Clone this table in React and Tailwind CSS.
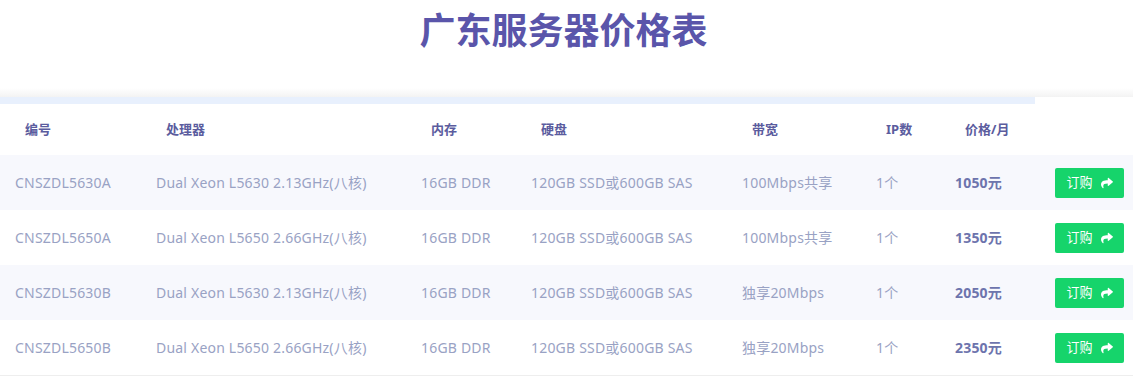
import React from "react";
import { FaShare } from "react-icons/fa";

const servers = [
  { id: "CNSZDL5630A", cpu: "Dual Xeon L5630 2.13GHz(八核)", ram: "16GB DDR", disk: "120GB SSD或600GB SAS", bw: "100Mbps共享", ip: "1个", price: "1050元" },
  { id: "CNSZDL5650A", cpu: "Dual Xeon L5650 2.66GHz(八核)", ram: "16GB DDR", disk: "120GB SSD或600GB SAS", bw: "100Mbps共享", ip: "1个", price: "1350元" },
  { id: "CNSZDL5630B", cpu: "Dual Xeon L5630 2.13GHz(八核)", ram: "16GB DDR", disk: "120GB SSD或600GB SAS", bw: "独享20Mbps", ip: "1个", price: "2050元" },
  { id: "CNSZDL5650B", cpu: "Dual Xeon L5650 2.66GHz(八核)", ram: "16GB DDR", disk: "120GB SSD或600GB SAS", bw: "独享20Mbps", ip: "1个", price: "2350元" },
];

const widths = ["w-[141px]", "w-[265px]", "w-[110px]", "w-[211px]", "w-[134px]", "w-[79px]", "w-[100px]"];
const headers = ["编号", "处理器", "内存", "硬盘", "带宽", "IP数", "价格/月"];

const App = () => {
  return (
    <div
      className="w-[1133px] h-[377px] bg-white overflow-hidden"
      style={{ fontFamily: '"Noto Sans", "Noto Sans CJK SC", sans-serif' }}
    >
      <h1 className="pt-[8px] h-[88px] pr-[6px] text-center text-[36px] font-bold leading-[46px] text-[#5a55aa]">
        广东服务器价格表
      </h1>
      <div className="h-[9px] bg-gradient-to-b from-white to-[#f3f3f3]" />
      <div className="h-[7px] w-[1035px] bg-[#e8f0fd]" />

      <div className="flex h-[51px] items-center pl-[15px]">
        {headers.map((h, i) => (
          <div
            key={h}
            className={`${widths[i]} pl-[10px] text-[13px] font-bold text-[#5b5c9e]`}
          >
            {h}
          </div>
        ))}
      </div>

      <div className="border-b border-[#eeeeee]">
        {servers.map((s, idx) => (
          <div
            key={s.id}
            className={`flex h-[55px] items-center pl-[15px] text-[14px] tracking-[0.2px] text-[#99a2c4] ${
              idx % 2 === 0 ? "bg-[#f7f8fd]" : "bg-white"
            }`}
          >
            <div className={widths[0]}>{s.id}</div>
            <div className={widths[1]}>{s.cpu}</div>
            <div className={widths[2]}>{s.ram}</div>
            <div className={widths[3]}>{s.disk}</div>
            <div className={widths[4]}>{s.bw}</div>
            <div className={widths[5]}>{s.ip}</div>
            <div className={`${widths[6]} font-bold text-[#6d74ad]`}>{s.price}</div>
            <button className="flex h-[30px] w-[69px] items-center justify-center gap-[8px] rounded-[2px] bg-[#16d46b] text-[13px] tracking-normal text-white">
              <span>订购</span>
              <FaShare className="h-[12px] w-[12px]" />
            </button>
          </div>
        ))}
      </div>
    </div>
  );
};

export default App;
